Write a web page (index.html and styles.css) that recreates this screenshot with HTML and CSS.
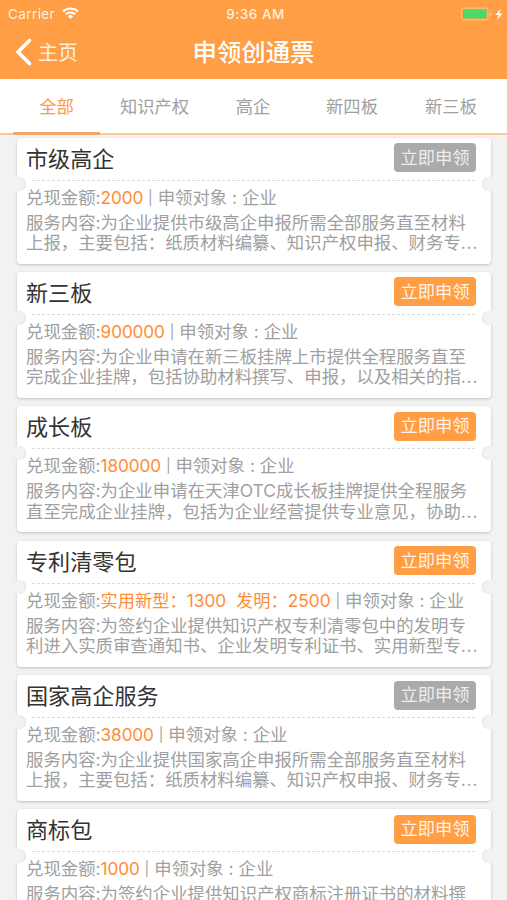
FILE: index.html
```html
<!DOCTYPE html>
<html lang="zh-CN">
<head>
<meta charset="utf-8">
<title>申领创通票</title>
<link rel="stylesheet" href="styles.css">
</head>
<body>
<header class="header">
  <div class="status">
    <div class="carrier">Carrier
      <svg class="wifi" viewBox="0 0 17 12"><path d="M1 4.500a11 11 0 0 1 15 0M3.700 7.300a7 7 0 0 1 9.600 0" fill="none" stroke="#fff" stroke-width="2"/><path d="M5.800 9.200a4 4 0 0 1 5.400 0L8.500 12z" fill="#fff"/></svg>
    </div>
    <div class="time">9:36 AM</div>
    <div class="power">
      <svg width="50" height="14" viewBox="0 0 50 14"><rect x="3.500" y="1.200" width="26.500" height="11.500" rx="2" fill="none" stroke="#ffc78a" stroke-width="1"/><rect x="5" y="2.600" width="23.500" height="9" rx="1" fill="#4cd964"/><path d="M32 5.400v3.500q1.500-.5 1.500-1.750T32 5.400z" fill="#ffd3a0"/><path d="M42.500 1.800 37.500 8.100h3l-1.300 5 5.300-6.700h-3.200z" fill="#fff"/></svg>
    </div>
  </div>
  <div class="nav">
    <div class="back"><svg width="17" height="28" viewBox="0 0 17 28"><path d="M14.500 2.500 3 14l11.500 11.500" fill="none" stroke="#fff" stroke-width="3.600" stroke-linecap="round"/></svg><span>主页</span></div>
    <h1>申领创通票</h1>
    <div></div>
  </div>
</header>
<nav class="tabs">
  <a class="tab t1 active">全部</a><a class="tab t2">知识产权</a><a class="tab t3">高企</a><a class="tab t4">新四板</a><a class="tab t5">新三板</a>
</nav>
<main class="list">
  <section class="card">
    <div class="head"><h2>市级高企</h2><button class="btn off">立即申领</button></div>
    <div class="dash"></div>
    <p class="meta">兑现金额:<b>2000</b> <i>|</i> 申领对象 : 企业</p>
    <p class="desc">服务内容:为企业提供市级高企申报所需全部服务直至材料<br>上报，主要包括：纸质材料编纂、知识产权申报、财务专<span class="more">...</span></p>
  </section>
  <section class="card">
    <div class="head"><h2>新三板</h2><button class="btn">立即申领</button></div>
    <div class="dash"></div>
    <p class="meta">兑现金额:<b>900000</b> <i>|</i> 申领对象 : 企业</p>
    <p class="desc">服务内容:为企业申请在新三板挂牌上市提供全程服务直至<br>完成企业挂牌，包括协助材料撰写、申报，以及相关的指<span class="more">...</span></p>
  </section>
  <section class="card">
    <div class="head"><h2>成长板</h2><button class="btn">立即申领</button></div>
    <div class="dash"></div>
    <p class="meta">兑现金额:<b>180000</b> <i>|</i> 申领对象 : 企业</p>
    <p class="desc">服务内容:为企业申请在天津OTC成长板挂牌提供全程服务<br>直至完成企业挂牌，包括为企业经营提供专业意见，协助<span class="more">...</span></p>
  </section>
  <section class="card">
    <div class="head"><h2>专利清零包</h2><button class="btn">立即申领</button></div>
    <div class="dash"></div>
    <p class="meta">兑现金额:<b class="wide">实用新型：1300&nbsp; 发明：2500</b> <i>|</i> 申领对象 : 企业</p>
    <p class="desc">服务内容:为签约企业提供知识产权专利清零包中的发明专<br>利进入实质审查通知书、企业发明专利证书、实用新型专<span class="more">...</span></p>
  </section>
  <section class="card">
    <div class="head"><h2>国家高企服务</h2><button class="btn off">立即申领</button></div>
    <div class="dash"></div>
    <p class="meta">兑现金额:<b>38000</b> <i>|</i> 申领对象 : 企业</p>
    <p class="desc">服务内容:为企业提供国家高企申报所需全部服务直至材料<br>上报，主要包括：纸质材料编纂、知识产权申报、财务专<span class="more">...</span></p>
  </section>
  <section class="card">
    <div class="head"><h2>商标包</h2><button class="btn">立即申领</button></div>
    <div class="dash"></div>
    <p class="meta">兑现金额:<b>1000</b> <i>|</i> 申领对象 : 企业</p>
    <p class="desc">服务内容:为签约企业提供知识产权商标注册证书的材料撰</p>
  </section>
</main>
</body>
</html>
```
FILE: styles.css
```css
* { box-sizing: border-box; margin: 0; padding: 0; }
html, body { height: 900px; overflow: hidden; }
body {
  display: flex;
  flex-direction: column;
  background: #f2f2f2;
  font-family: Inter, "Noto Sans CJK SC", sans-serif;
  font-weight: 400;
}
.header { flex: none; height: 79px; background: #ff9e44; color: #fff; }
.status {
  display: grid;
  grid-template-columns: 1fr auto 1fr;
  align-items: center;
  height: 27px;
  padding: 0 4px 0 8px;
  font-size: 13.5px;
  color: #fff0dc;
}
.carrier { display: flex; align-items: center; gap: 7px; letter-spacing: .4px; }
.wifi { width: 17px; height: 12px; margin-top: -1px; }
.time { font-weight: 500; letter-spacing: .5px; color: #fff0dc; }
.power { display: flex; justify-content: flex-end; margin-right: -5px; }
.nav {
  display: grid;
  grid-template-columns: 1fr auto 1fr;
  align-items: center;
  height: 50px;
  padding: 0 15px;
}
.back { display: flex; align-items: center; gap: 6px; font-size: 20px; line-height: 28px; }
.back span { padding-top: 2px; color: #fff0dc; }
.nav h1 { font-size: 24.4px; line-height: 36px; font-weight: 500; }
.tabs {
  flex: none;
  display: flex;
  height: 56px;
  background: #fff;
  border-bottom: 2px solid #fbc88f;
  font-size: 17.3px;
  line-height: 56px;
  color: #a0a0a0;
  text-align: center;
}
.tab { height: 56px; }
.t1 { width: 87px; margin-left: 13px; }
.t2 { width: 109px; }
.t3 { width: 88px; }
.t4 { width: 110px; }
.t5 { width: 88px; }
.active { color: #ff9a40; border-bottom: 3px solid #f0a868; }
.list {
  display: flex;
  flex-direction: column;
  gap: 8.4px;
  padding: 2.500px 16px 0 17px;
}
.card {
  flex: none;
  position: relative;
  height: 126px;
  padding: 0 9px;
  background: #fff;
  border-radius: 4px;
  box-shadow: 0 1px 3px rgba(0, 0, 0, .2);
}
.card::before, .card::after {
  content: "";
  position: absolute;
  top: 39.500px;
  width: 12px;
  height: 14px;
  background: #f2f2f2;
}
.card::before { left: -3px; border-radius: 0 7px 7px 0; box-shadow: inset -1px 0 1px #e2e2e2; }
.card::after { right: -3px; border-radius: 7px 0 0 7px; box-shadow: inset 1px 0 1px #e2e2e2; }
.head { display: flex; justify-content: space-between; height: 42px; padding-right: 6px; }
.head h2 { font-size: 22.1px; line-height: 42px; font-weight: 400; color: #333; }
.btn {
  width: 82px;
  height: 29px;
  margin-top: 5.500px;
  border: 0;
  border-radius: 4px;
  background: #ff9e44;
  color: #fff4e6;
  font: inherit;
  font-size: 17.3px;
  line-height: 28px;
}
.off { background: #aaa; color: #eee; }
.dash {
  height: 1px;
  margin: 0 6px;
  background: repeating-linear-gradient(90deg, #dadada 0 3px, #fff 3px 5px);
}
.meta, .desc { font-size: 17.4px; font-weight: 400; color: #a0a0a0; white-space: nowrap; }
.meta { line-height: 26px; padding-top: 4px; }
.meta b { font-weight: 400; font-size: 17.2px; letter-spacing: -.1px; color: #ff8c37; }
.meta b.wide { letter-spacing: .05px; }
.meta i { font-style: normal; font-size: 14px; position: relative; top: -1px; }
.desc { line-height: 20.400px; padding-top: 1px; }
.more { letter-spacing: .8px; }
```
